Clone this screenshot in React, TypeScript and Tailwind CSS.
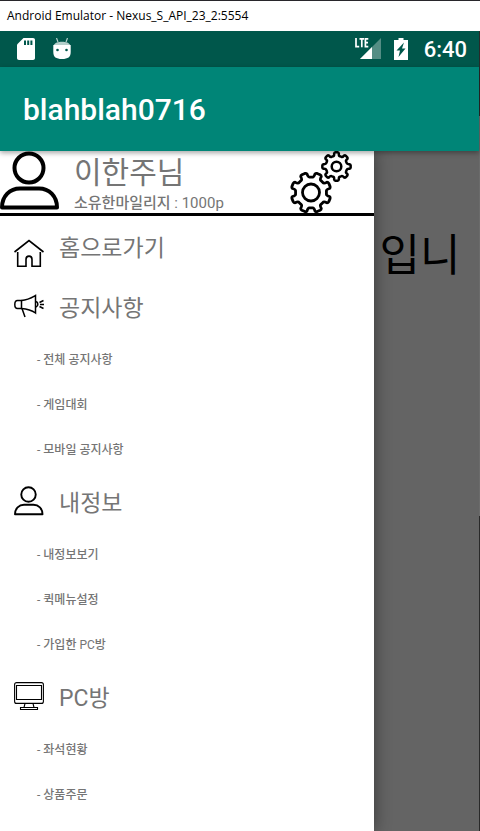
import React from 'react';

type IconProps = { className?: string };

const KO = "font-[Roboto,'Noto_Sans_CJK_KR',sans-serif]";

function PersonIcon({ className, weight }: IconProps & { weight: number }) {
  return (
    <svg viewBox="0 0 60 60" className={className} fill="none" stroke="#000" strokeWidth={weight} strokeLinejoin="round" aria-hidden="true">
      <circle cx="29" cy="17" r="14.5" />
      <path d="M2 56.500C2 45 10 37.500 20 37.500H39C49 37.500 57 45 57 56.500Z" />
    </svg>
  );
}

function gearPath(cx: number, cy: number, outer: number, inner: number): string {
  const at = (angle: number, radius: number) =>
    `${(cx + radius * Math.sin(angle)).toFixed(2)} ${(cy - radius * Math.cos(angle)).toFixed(2)}`;
  let path = '';
  for (let i = 0; i < 8; i++) {
    const base = (i * Math.PI) / 4;
    path += `${i === 0 ? 'M' : 'L'}${at(base - 0.18, outer - 1)}`;
    path += `Q${at(base - 0.15, outer)} ${at(base - 0.08, outer)}`;
    path += `L${at(base + 0.08, outer)}`;
    path += `Q${at(base + 0.15, outer)} ${at(base + 0.18, outer - 1)}`;
    path += `Q${at(base + 0.2, inner)} ${at(base + 0.3, inner)}`;
    path += `L${at(base + Math.PI / 4 - 0.3, inner)}`;
    path += `Q${at(base + Math.PI / 4 - 0.2, inner)} ${at(base + Math.PI / 4 - 0.18, outer - 1)}`;
  }
  return `${path}Z`;
}

function GearsIcon({ className }: IconProps) {
  return (
    <svg viewBox="0 0 62 62" className={className} fill="none" stroke="#000" strokeLinejoin="round" aria-hidden="true">
      <g transform="rotate(22.5 21 41.5)" strokeWidth="2.800">
        <path d={gearPath(21, 41.5, 20, 15.5)} />
      </g>
      <circle cx="21" cy="41.500" r="8.500" strokeWidth="2.800" />
      <path d={gearPath(46.5, 15.5, 14.2, 10.8)} strokeWidth="2.500" />
      <circle cx="46.500" cy="15.500" r="4.800" strokeWidth="2.500" />
    </svg>
  );
}

function HomeIcon({ className }: IconProps) {
  return (
    <svg viewBox="0 0 30 30" className={className} fill="none" stroke="#000" strokeWidth="1.600" aria-hidden="true">
      <path d="M0.500 13L15 1.500L29.500 13" />
      <path d="M3.700 13V27.300H12V20.500C12 16 18 16 18 20.500V27.300H26.300V13" />
    </svg>
  );
}

function MegaphoneIcon({ className }: IconProps) {
  return (
    <svg viewBox="0 0 30 30" className={className} fill="none" stroke="#000" strokeWidth="1.500" aria-hidden="true">
      <path d="M7.500 9.500H3.500C1.500 9.500 0.800 11 0.800 13.500S1.500 17.500 3.500 17.500H7.500Z" />
      <path d="M7.500 9.500C14 9 18 6.500 21.500 4.500V22C18 19.500 14 18 7.500 17.500" />
      <path d="M8 17.500L11 26M22 10.500C24.500 11.500 24.500 15 22 16M25.500 11.500L29.500 9.500M26 13.500H30M25.500 15.500L29.500 17.500" />
    </svg>
  );
}

function MonitorIcon({ className }: IconProps) {
  return (
    <svg viewBox="0 0 30 30" className={className} fill="none" stroke="#000" strokeWidth="1.100" aria-hidden="true">
      <rect x="0.600" y="1.600" width="28.800" height="20.800" rx="2" />
      <path d="M2.500 4.500H27.500V18.500H2.500Z" />
      <path d="M11 22.500L10 26.500M19 22.500L20 26.500M6.500 26.500H23.500V28.500H6.500Z" />
    </svg>
  );
}

function SdCardIcon() {
  return (
    <svg viewBox="0 0 18 22" className="h-[22px] w-[18px]" aria-hidden="true">
      <path d="M6.500 0H16C17.200 0 18 0.800 18 2V20C18 21.200 17.200 22 16 22H2C0.800 22 0 21.200 0 20V6.500Z" fill="#fff" />
      <path d="M7 2.500H9V7H7ZM10.200 2.500H12.200V7H10.200ZM13.400 2.500H15.400V7H13.400Z" fill="#00574b" />
    </svg>
  );
}

function AndroidHeadIcon() {
  return (
    <svg viewBox="0 0 18 22" className="h-[22px] w-[18px]" aria-hidden="true">
      <path d="M3.500 0L5 4M14.500 0L13 4" stroke="#b5d0cb" strokeWidth="1.200" />
      <path d="M1 7C2 2.500 16 2.500 17 7Z" fill="#b5d0cb" />
      <path d="M0.300 7H17.700V14C17.700 19 15 21 9 21S0.300 19 0.300 14Z" fill="#fff" />
      <circle cx="4.500" cy="12" r="1.300" fill="#00574b" />
      <circle cx="13.500" cy="12" r="1.300" fill="#00574b" />
    </svg>
  );
}

function SignalIcon() {
  return (
    <svg viewBox="0 0 27 24" className="h-6 w-[27px]" role="img" aria-label="LTE">
      <path d="M26 1V22H5Z" fill="#548d84" />
      <path d="M17 10V22H5Z" fill="#fff" />
      <path d="M1 1V9.600H4.200M4.500 1.800H9M6.800 1.800V10.300M13.300 1.800H10.400V9.600H13.300M10.400 5.700H13" stroke="#fff" strokeWidth="1.700" fill="none" />
    </svg>
  );
}

function BatteryIcon() {
  return (
    <svg viewBox="0 0 14 22" className="h-[22px] w-[14px]" aria-hidden="true">
      <path d="M4.500 0H9.500V2H14V22H0V2H4.500Z" fill="#fff" />
      <path d="M10 4.500L2.500 12.500H6L4.500 19L11.500 10.500H8Z" fill="#00574b" />
    </svg>
  );
}

type MenuItem = { label: string; suffix?: React.ReactNode };
type Section = { title: string; icon: React.ReactNode; items: MenuItem[] };

const sections: Section[] = [
  { title: '홈으로가기', icon: <HomeIcon className="mt-4 size-[30px]" />, items: [] },
  {
    title: '공지사항',
    icon: <MegaphoneIcon className="size-[30px]" />,
    items: [{ label: '전체 공지사항' }, { label: '게임대회' }, { label: '모바일 공지사항' }],
  },
  {
    title: '내정보',
    icon: <PersonIcon weight={3.8} className="size-[30px]" />,
    items: [
      { label: '내정보보기' },
      { label: '퀵메뉴설정' },
      {
        label: '가입한 ',
        suffix: (
          <>
            <span className="font-normal">PC</span>방
          </>
        ),
      },
    ],
  },
  {
    title: 'PC방',
    icon: <MonitorIcon className="size-[30px]" />,
    items: [{ label: '좌석현황' }, { label: '상품주문' }],
  },
];

export default function App() {
  return (
    <div className={`flex h-screen flex-col overflow-hidden bg-[#646464] ${KO}`}>
      <div className="flex h-[31px] shrink-0 items-center border-t border-[#28262b] bg-white px-[7px] font-['Open_Sans',sans-serif] text-xs text-black">
        Android Emulator - Nexus_S_API_23_2:5554
      </div>
      <div className="flex min-h-0 flex-1 flex-col bg-[linear-gradient(#292929_85px,#6b6b6b_85px,#6b6b6b_485px,#292929_485px)] pr-px">
        <div className="flex h-9 shrink-0 items-center justify-between bg-[#00574b] pr-3 pl-[17px] text-white">
          <div className="flex items-center gap-[18px]">
            <SdCardIcon />
            <AndroidHeadIcon />
          </div>
          <div className="flex items-center">
            <SignalIcon />
            <span className="ml-3 flex">
              <BatteryIcon />
            </span>
            <time className="ml-4 pt-[2px] text-[22px] leading-8 font-medium">6:40</time>
          </div>
        </div>
        <header className="z-10 flex h-[84px] shrink-0 items-center bg-[#008577] px-[23px] shadow-[0_2px_5px_rgba(0,0,0,0.35)]">
          <h1 className="text-[30px] font-medium text-white">blahblah0716</h1>
        </header>
        <div className="flex min-h-0 flex-1 bg-[#646464]">
          <aside className="w-[78%] shrink-0 overflow-hidden bg-white text-[#757575] shadow-[0_0_16px_rgba(0,0,0,0.45)]">
            <div className="flex h-[65px] border-b-[3px] border-black">
              <PersonIcon weight={4} className="size-[60px] shrink-0" />
              <div className="flex-1 pt-[2px] pl-[14px]">
                <p className="text-[30px] leading-10">이한주님</p>
                <p className="text-[15px] leading-5">
                  <span className="font-medium">소유한마일리지</span> : 1000p
                </p>
              </div>
              <button type="button" aria-label="설정" className="mr-[22px] flex h-[62px]">
                <GearsIcon className="size-[62px]" />
              </button>
            </div>
            <nav>
              {sections.map((section) => (
                <section key={section.title}>
                  <a href="#" className="flex h-[60px] items-center gap-[15px] pl-[14px]">
                    {section.icon}
                    <span className="pt-[6px] text-[23px]">{section.title}</span>
                  </a>
                  {section.items.length > 0 && (
                    <ul>
                      {section.items.map((item) => (
                        <li key={item.label}>
                          <a href="#" className="flex h-[45px] items-center pt-[2px] pl-[37px] text-xs">
                            <span>
                              -{' '}
                              <span className="font-medium">
                                {item.label}
                                {item.suffix}
                              </span>
                            </span>
                          </a>
                        </li>
                      ))}
                    </ul>
                  )}
                </section>
              ))}
            </nav>
          </aside>
          <main className="min-w-0 flex-1 overflow-hidden pt-[71px] pl-[6px] text-[44px] leading-[68px] whitespace-nowrap text-black">
            입니
          </main>
        </div>
      </div>
    </div>
  );
}
